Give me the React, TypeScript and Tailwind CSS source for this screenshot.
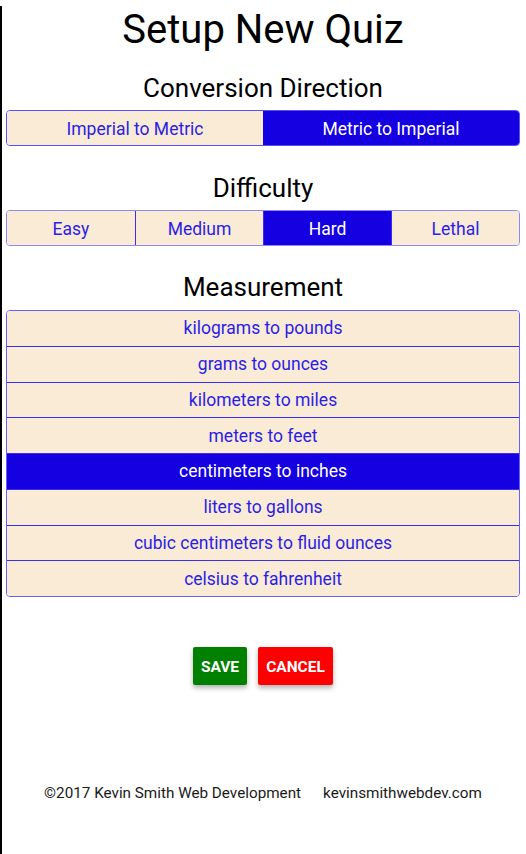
import React, { useState } from 'react';

const DIRECTIONS = ['Imperial to Metric', 'Metric to Imperial'];
const LEVELS = ['Easy', 'Medium', 'Hard', 'Lethal'];
const MEASUREMENTS = [
  'kilograms to pounds',
  'grams to ounces',
  'kilometers to miles',
  'meters to feet',
  'centimeters to inches',
  'liters to gallons',
  'cubic centimeters to fluid ounces',
  'celsius to fahrenheit',
];

export default function App() {
  const [direction, setDirection] = useState(1);
  const [level, setLevel] = useState(2);
  const [measure, setMeasure] = useState(4);

  return (
    <div className="w-[526px] min-h-[854px] bg-white border-l-2 border-black pl-[4px] pr-[6px] font-['Roboto',sans-serif] text-black">
      <h1 className="mt-[6px] text-center text-[40px] leading-[48px]">Setup New Quiz</h1>

      {/* Conversion direction */}
      <h2 className="mt-[19px] text-center text-[26px] leading-[30px]">Conversion Direction</h2>
      <div className="mt-[7px] grid grid-cols-2 h-[36px] rounded-[4px] border border-[#5b50f0] overflow-hidden">
        {DIRECTIONS.map((d, i) => (
          <button
            key={d}
            onClick={() => setDirection(i)}
            className={`pt-[3px] text-[17.5px] ${direction === i ? 'bg-[#1400e0] text-white' : 'bg-[#faebd7] text-[#2a1ee6]'}`}
          >
            {d}
          </button>
        ))}
      </div>

      {/* Difficulty */}
      <h2 className="mt-[27px] text-center text-[26px] leading-[30px]">Difficulty</h2>
      <div className="mt-[7px] grid grid-cols-4 h-[36px] rounded-[4px] border border-[#8f88f0] overflow-hidden">
        {LEVELS.map((l, i) => (
          <button
            key={l}
            onClick={() => setLevel(i)}
            className={`pt-[2px] text-[17.5px] ${i > 0 ? 'border-l border-[#3a2ff0]' : ''} ${level === i ? 'bg-[#1400e0] text-white' : 'bg-[#faebd7] text-[#2a1ee6]'}`}
          >
            {l}
          </button>
        ))}
      </div>

      {/* Measurement */}
      <h2 className="mt-[26px] text-center text-[26px] leading-[30px]">Measurement</h2>
      <div className="mt-[8px] flex flex-col rounded-[4px] border border-[#6a60f0] overflow-hidden">
        {MEASUREMENTS.map((m, i) => (
          <button
            key={m}
            onClick={() => setMeasure(i)}
            className={`h-[34.75px] box-content text-[17.5px] ${i > 0 ? 'border-t border-[#3a2ff0]' : ''} ${measure === i ? 'bg-[#1400e0] text-white' : 'bg-[#faebd7] text-[#2a1ee6]'}`}
          >
            {m}
          </button>
        ))}
      </div>

      {/* Actions */}
      <div className="mt-[50px] flex justify-center gap-[11px]">
        <button className="h-[38px] w-[54px] pt-[3px] rounded-[2px] bg-[#008000] text-white text-[15.5px] font-bold uppercase shadow-[0_3px_5px_rgba(0,0,0,0.3)]">
          Save
        </button>
        <button className="h-[38px] w-[75px] pt-[3px] rounded-[2px] bg-[#ff0000] text-white text-[15.5px] font-bold uppercase shadow-[0_3px_5px_rgba(0,0,0,0.3)]">
          Cancel
        </button>
      </div>

      {/* Footer */}
      <div className="mt-[98px] flex justify-center gap-[22px] text-[15.25px] leading-[20px] text-[#1a1a1a]">
        <span>©2017 Kevin Smith Web Development</span>
        <span>kevinsmithwebdev.com</span>
      </div>
    </div>
  );
}
